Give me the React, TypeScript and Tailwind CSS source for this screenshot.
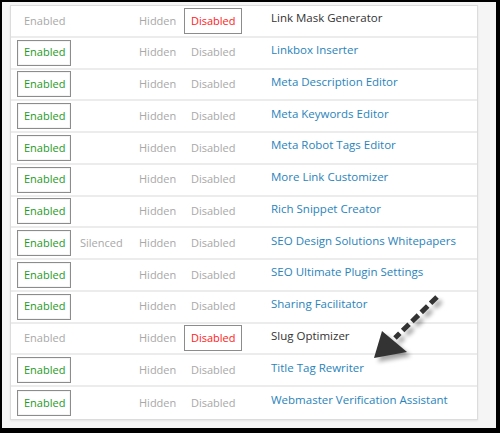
import React from 'react';

type Row = {
  name: string;
  enabled: boolean;
  silenced?: boolean;
};

const rows: Row[] = [
  { name: 'Link Mask Generator', enabled: false },
  { name: 'Linkbox Inserter', enabled: true },
  { name: 'Meta Description Editor', enabled: true },
  { name: 'Meta Keywords Editor', enabled: true },
  { name: 'Meta Robot Tags Editor', enabled: true },
  { name: 'More Link Customizer', enabled: true },
  { name: 'Rich Snippet Creator', enabled: true },
  { name: 'SEO Design Solutions Whitepapers', enabled: true, silenced: true },
  { name: 'SEO Ultimate Plugin Settings', enabled: true },
  { name: 'Sharing Facilitator', enabled: true },
  { name: 'Slug Optimizer', enabled: false },
  { name: 'Title Tag Rewriter', enabled: true },
  { name: 'Webmaster Verification Assistant', enabled: true },
];

const ModuleRow: React.FC<{ row: Row; last: boolean }> = ({ row, last }) => {
  const box = 'h-[26px] flex items-center pl-[6px] border';
  return (
    <div
      className={`h-[31.75px] flex items-center ${last ? '' : 'border-b-2 border-[#ececec]'}`}
    >
      <div className="w-[62px] pl-[6px] shrink-0">
        <div
          className={`${box} w-[54px] ${
            row.enabled
              ? 'border-[#8c8c8c] text-[#1e9a1e] shadow-[inset_0_0_0_1px_#f4f4f4]'
              : 'border-transparent text-[#a8a8a8]'
          }`}
        >
          Enabled
        </div>
      </div>
      <div className={`${box} w-[59px] border-transparent text-[#a8a8a8] shrink-0`}>
        {row.silenced ? 'Silenced' : ''}
      </div>
      <div className={`${box} w-[50px] border-transparent text-[#a8a8a8] shrink-0`}>Hidden</div>
      <div
        className={`${box} w-[58px] ml-[2px] shrink-0 ${
          row.enabled
            ? 'border-transparent text-[#a8a8a8]'
            : 'border-[#8c8c8c] text-[#ff1a1a]'
        }`}
      >
        Disabled
      </div>
      <div
        className={`relative -top-[3px] pl-[29px] whitespace-nowrap text-[11.5px] ${
          row.enabled ? 'text-[#2a84bb]' : 'text-[#333333]'
        }`}
      >
        {row.name}
      </div>
    </div>
  );
};

const Arrow: React.FC = () => (
  <svg
    className="absolute left-0 top-0 pointer-events-none"
    width="500"
    height="433"
    viewBox="0 0 500 433"
  >
    <defs>
      <filter id="blur" x="-20%" y="-20%" width="140%" height="140%">
        <feGaussianBlur stdDeviation="2" />
      </filter>
    </defs>
    <g opacity="0.35" filter="url(#blur)" transform="translate(4 4)">
      <line x1="437" y1="297" x2="395" y2="338" stroke="#000" strokeWidth="5" strokeDasharray="9 4" />
      <polygon points="374,358 382,331 407,352" fill="#000" />
    </g>
    <line
      x1="437"
      y1="297"
      x2="395"
      y2="338"
      stroke="#333"
      strokeWidth="5"
      strokeDasharray="9 4"
    />
    <polygon points="374,358 382,331 407,352" fill="#333" />
  </svg>
);

export default function App() {
  return (
    <div
      className="relative w-[500px] h-[433px] bg-black pt-[2px] pl-[2px] pr-[4px] pb-[5px] flex"
      style={{ fontFamily: '"Open Sans", "Liberation Sans", sans-serif' }}
    >
      <div className="flex-1 bg-[#f5f5f5] pl-[8px] pt-[3px] overflow-hidden">
        <div className="w-[468px] bg-white border border-[#dcdcdc] text-[11px] shadow-[0_1px_2px_rgba(0,0,0,0.08)]">
          {rows.map((row, i) => (
            <ModuleRow key={row.name} row={row} last={i === rows.length - 1} />
          ))}
        </div>
      </div>
      <Arrow />
    </div>
  );
}
